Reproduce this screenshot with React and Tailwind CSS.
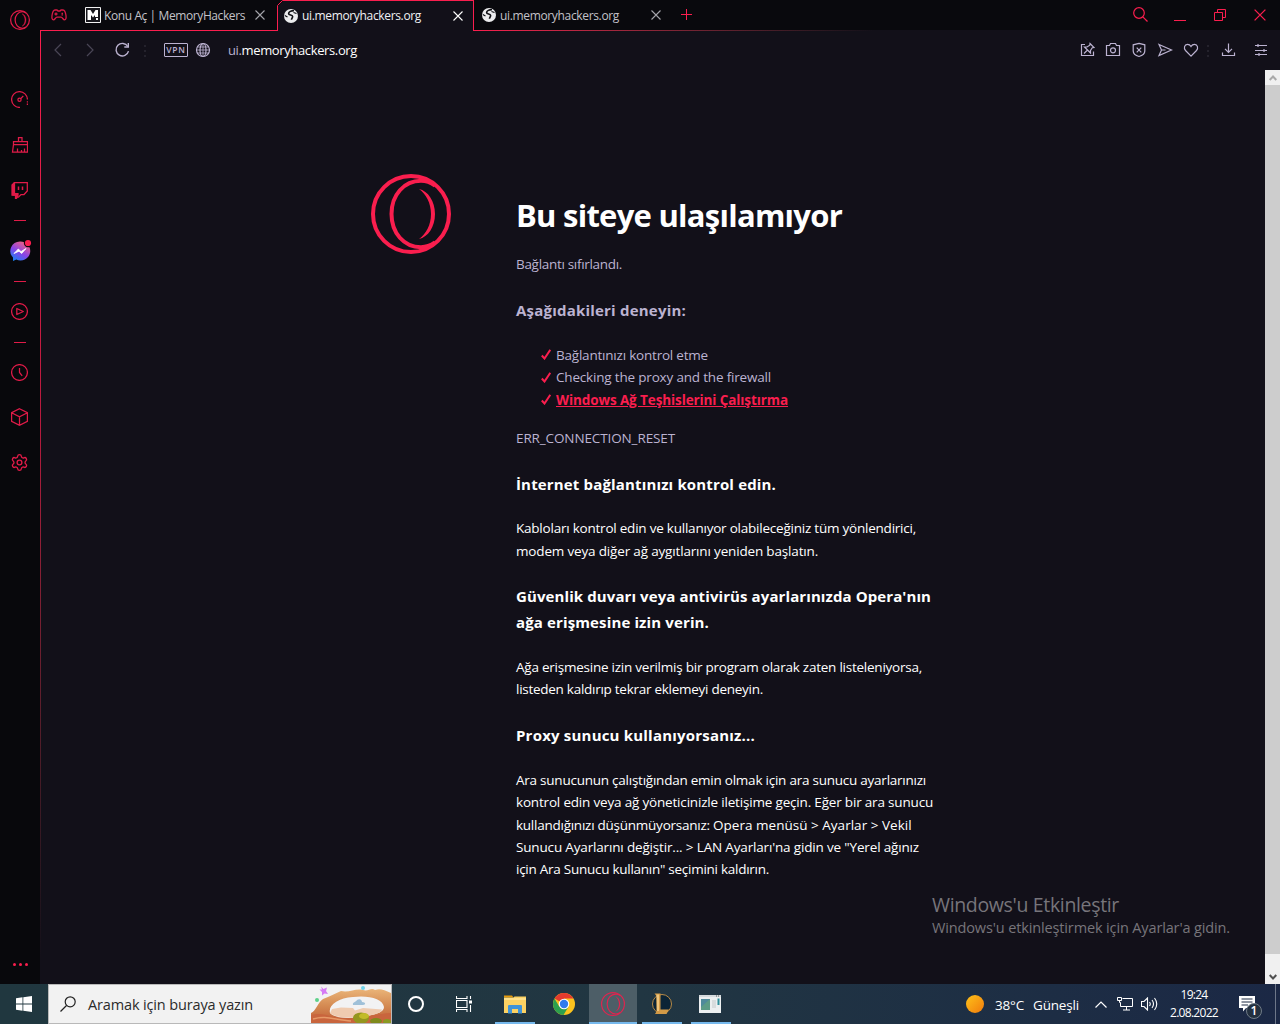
import { Settings } from "lucide-react";

function OperaLogo({ className, stroke = 4 }) {
  return (
    <svg viewBox="0 0 80 80" className={className} fill="none" stroke="currentColor" strokeWidth={stroke}>
      <circle cx="40" cy="40" r={40 - stroke / 2} />
      <path d="M64 11.5C59 8 54.500 6.800 50 6.800C33 6.800 20.500 21 20.500 40S33 73.200 50 73.200C54.500 73.200 59 72 64 68.500" />
      <path
        d="M48 15C57 17 64 27 64 40S57 63 48 65C55 60 60 51 60 40S55 20 48 15Z"
        fill="currentColor"
        strokeWidth={stroke > 4 ? 1.5 : 0}
      />
    </svg>
  );
}

function CloseIcon({ className }) {
  return (
    <svg viewBox="0 0 10 10" className={className} stroke="currentColor" strokeWidth="1.1">
      <path d="M0.500 0.500L9.500 9.500M9.500 0.500L0.500 9.500" />
    </svg>
  );
}

function GlobeFavicon() {
  return (
    <svg viewBox="0 0 14 14" className="w-[14px] h-[14px] shrink-0">
      <circle cx="7" cy="7" r="7" fill="#ececee" />
      <path d="M10 1.600C7.500 1.500 4.500 2.800 4.600 4.600C4.700 6.300 8.300 5.500 8.600 7.300C8.900 8.800 7.500 9 7.500 10.800" fill="none" stroke="#101014" strokeWidth="1.600" />
      <path d="M9.500 3.500L12.500 4.500M0.800 6.500L3.500 8" fill="none" stroke="#101014" strokeWidth="1.200" />
    </svg>
  );
}

function ToolIcon({ children, className = "w-4 h-4" }) {
  return (
    <svg viewBox="0 0 16 16" className={className} fill="none" stroke="currentColor" strokeWidth="1.200">
      {children}
    </svg>
  );
}

function Dots({ className }) {
  return (
    <div className={`flex flex-col gap-[3px] ${className}`}>
      <i className="w-[2px] h-[2px] bg-[#24222c]" />
      <i className="w-[2px] h-[2px] bg-[#24222c]" />
      <i className="w-[2px] h-[2px] bg-[#24222c]" />
    </div>
  );
}

function Dash({ className = "h-[15px]" }) {
  return (
    <div className={`flex items-center justify-center ${className}`}>
      <i className="w-3 h-px bg-[#e01b48]" />
    </div>
  );
}

function SideItem({ children, className = "h-[45px]" }) {
  return <div className={`flex items-center justify-center pr-px ${className}`}>{children}</div>;
}

function SideIcon({ children }) {
  return (
    <svg viewBox="0 0 17 17" className="w-[17px] h-[17px]" fill="none" stroke="currentColor" strokeWidth="1.250">
      {children}
    </svg>
  );
}

function Sidebar() {
  return (
    <aside className="w-10 shrink-0 flex flex-col bg-[#08080c] text-[#e01b48]">
      <div className="h-10 flex items-center justify-center mb-[37px]">
        <OperaLogo className="w-5 h-5" stroke={5} />
      </div>
      <SideItem>
        <SideIcon>
          <path d="M9 16.400A7.900 7.900 0 1 1 16.400 8.500" />
          <circle cx="8.500" cy="8.800" r="1.600" />
          <path d="M9.700 7.600L12.300 5" />
          <path d="M16.400 10.300V14" strokeDasharray="1.300 1" />
        </SideIcon>
      </SideItem>
      <SideItem>
        <SideIcon>
          <path d="M7.500 5.500V1.500h3.500V5.500M2.500 8.500V5.500h14v3M2.500 8.500h14M2.500 8.500L1.500 16h15V8.500M6.500 16v-3.500M10.500 16v-2M13.500 16v-3.500" />
        </SideIcon>
      </SideItem>
      <SideItem className="h-[46px] pt-px">
        <SideIcon>
          <path d="M3.500 0.700H16.300V9L13 12.500H10L7.500 15H5.500V13H2V3Z" />
          <path d="M1 3L3.500 0.500V11.500H7V13L5.500 16.500H4.500V13H1Z" fill="currentColor" />
          <path d="M7.500 4.500V8M11.500 4.500V8" strokeWidth="1.500" />
        </SideIcon>
      </SideItem>
      <Dash />
      <div className="h-[46px] flex items-center justify-center">
        <svg viewBox="0 0 24 24" className="w-6 h-6">
          <defs>
            <linearGradient id="msg" x1="0.200" y1="1" x2="0.800" y2="0">
              <stop offset="0" stopColor="#1684f5" />
              <stop offset="0.450" stopColor="#8744e8" />
              <stop offset="1" stopColor="#ff6477" />
            </linearGradient>
          </defs>
          <path d="M12 2.500A9.800 9.500 0 0 0 5 18.500V22L8.300 20.600A9.800 9.500 0 1 0 12 2.500Z" fill="url(#msg)" />
          <path d="M6 14.500L10.300 10L13 12.600L18 9.500L13.700 14.500L11 12.200Z" fill="#fff" stroke="#fff" strokeWidth=".8" />
          <circle cx="20" cy="4" r="4.200" fill="#08080c" />
          <circle cx="20" cy="4" r="3.100" fill="#fa1e4e" />
        </svg>
      </div>
      <Dash />
      <SideItem>
        <SideIcon>
          <circle cx="8.500" cy="8.500" r="7.900" />
          <path d="M5.800 5.500V11.500L12.300 8.500Z" strokeLinejoin="round" />
        </SideIcon>
      </SideItem>
      <Dash className="h-4" />
      <SideItem>
        <SideIcon>
          <circle cx="8.500" cy="8.500" r="7.900" />
          <path d="M8.500 4V8.500L11.200 11.800" />
        </SideIcon>
      </SideItem>
      <SideItem className="h-[45px] pb-px">
        <svg viewBox="0 0 17 18" className="w-[17px] h-[18px]" fill="none" stroke="currentColor" strokeWidth="1.250">
          <path d="M8.500 0.700L16.400 4.700V13.300L8.500 17.300L0.600 13.300V4.700ZM0.600 4.700L8.500 8.800L16.400 4.700M8.500 8.800V17.300" />
        </svg>
      </SideItem>
      <SideItem>
        <Settings className="w-[19px] h-[19px]" strokeWidth={1.7} />
      </SideItem>
      <div className="mt-auto mb-[18px] flex gap-[3px] justify-center">
        <i className="w-[3px] h-[3px] rounded-full bg-[#fa1e4e]" />
        <i className="w-[3px] h-[3px] rounded-full bg-[#fa1e4e]" />
        <i className="w-[3px] h-[3px] rounded-full bg-[#fa1e4e]" />
      </div>
    </aside>
  );
}

function TabBar() {
  return (
    <div className="h-[31px] flex bg-[#09090d] text-xs">
      <div className="w-[237px] shrink-0 flex items-center border-b border-[#fa1e4e]">
        <svg viewBox="0 0 16 12" className="w-4 h-3 ml-[11px] shrink-0 text-[#d81b46]" fill="none" stroke="currentColor" strokeWidth="1.300">
          <path d="M4 1H6L7 2H9L10 1H12C14 1 14.500 3 15 6.500C15.300 9 15 10.800 13.500 10.800C12 10.800 11.500 8.200 10 8.200H6C4.500 8.200 4 10.800 2.500 10.800C1 10.800 0.700 9 1 6.500C1.500 3 2 1 4 1Z" />
          <path d="M5 3.500V6.500M3.500 5H6.500M10.500 4.300H12M10.500 5.800H12" />
        </svg>
        <svg viewBox="0 0 16 16" className="w-4 h-4 ml-[18px] shrink-0">
          <path d="M0.500 0.500H15.500V15.500H0.500Z" fill="#17171c" stroke="#f1f1f1" />
          <path d="M2.500 13V3H5.500L8 7L10.500 3H13V10H10V8L8 10.500L6 8V13ZM11 11h2v2h-2z" fill="#fff" />
        </svg>
        <span className="ml-[3px] pt-[2px] whitespace-nowrap tracking-[-0.404px] text-[#c3c2c8]">Konu Aç | MemoryHackers</span>
        <CloseIcon className="w-[10px] h-[10px] ml-auto mr-[12px] shrink-0 text-[#a5a5ab]" />
      </div>
      <div className="relative w-[197px] shrink-0 flex items-center border-t border-x border-[#fa1e4e] bg-[#121019] pb-px">
        <svg viewBox="0 0 7 7" className="absolute -left-px -top-px w-[7px] h-[7px]">
          <path d="M0 0H7L0 7Z" fill="#09090d" />
          <path d="M0.500 7V5.500L5.500 0.500H7" fill="none" stroke="#fa1e4e" />
        </svg>
        <div className="ml-[6px] flex">
          <GlobeFavicon />
        </div>
        <span className="ml-1 pt-px whitespace-nowrap tracking-[-0.344px] text-[#f0f0f4]">ui.memoryhackers.org</span>
        <CloseIcon className="w-[10px] h-[10px] ml-auto mr-[10px] shrink-0 text-white" />
      </div>
      <div className="flex-1 flex flex-col">
        <div className="h-[30px] flex items-center">
          <div className="ml-2 flex">
            <GlobeFavicon />
          </div>
          <span className="ml-1 pt-[2px] whitespace-nowrap tracking-[-0.344px] text-[#c3c2c8] w-[150px]">ui.memoryhackers.org</span>
          <CloseIcon className="w-[10px] h-[10px] ml-px shrink-0 text-[#a5a5ab]" />
          <svg viewBox="0 0 11 11" className="w-[11px] h-[11px] ml-[20px] -mt-px text-[#fa1e4e]" stroke="currentColor">
            <path d="M5.500 0V11M0 5.500H11" />
          </svg>
          <div className="ml-auto flex items-center text-[#fa1e4e]">
            <svg viewBox="0 0 15 15" className="w-[15px] h-[15px] -mt-[2px]" fill="none" stroke="currentColor" strokeWidth="1.200">
              <circle cx="6" cy="6" r="5.300" />
              <path d="M9.800 9.800L14.500 14.500" />
            </svg>
            <i className="w-3 h-px bg-current ml-[26px] mt-[11px]" />
            <svg viewBox="0 0 12 12" className="w-3 h-3 ml-[28px]" fill="none" stroke="currentColor">
              <path d="M0.500 3.500H8.500V11.500H0.500ZM3.500 3.500V0.500H11.500V8.500H8.500" />
            </svg>
            <CloseIcon className="w-3 h-3 ml-[28px] mr-[14px]" />
          </div>
        </div>
        <div className="h-px bg-linear-to-r from-[#fa1e4e] to-[#121019] to-[400px]" />
      </div>
    </div>
  );
}

function Toolbar() {
  return (
    <div className="h-[39px] flex items-center bg-[#121019] text-[#bcb3d1]">
      <svg viewBox="0 0 8 14" className="w-2 h-[14px] ml-[13px] -mt-px text-[#4a4656]" fill="none" stroke="currentColor" strokeWidth="1.200">
        <path d="M7 1L1 7L7 13" />
      </svg>
      <svg viewBox="0 0 8 14" className="w-2 h-[14px] ml-[24px] -mt-px text-[#4a4656]" fill="none" stroke="currentColor" strokeWidth="1.200">
        <path d="M1 1L7 7L1 13" />
      </svg>
      <ToolIcon className="w-4 h-4 ml-[20px] -mt-px">
        <path d="M13.800 4.500A6.300 6.300 0 1 0 14.500 9.200" strokeWidth="1.400" />
        <path d="M14.300 1V5H10.300" strokeWidth="1.400" />
      </ToolIcon>
      <Dots className="ml-[14px]" />
      <span className="w-6 h-[14px] ml-[18px] -mt-px border border-[#bcb3d1] rounded-[1px] flex items-center justify-center text-[8.500px] font-semibold tracking-[0.700px]">VPN</span>
      <ToolIcon className="w-4 h-4 ml-[7px] -mt-px">
        <circle cx="8" cy="8" r="6.500" />
        <ellipse cx="8" cy="8" rx="3" ry="6.500" />
        <path d="M8 1.500V14.500M1.500 8H14.500M2.500 5H13.500M2.500 11H13.500" strokeWidth=".8" />
      </ToolIcon>
      <span className="ml-[17px] text-[13px] whitespace-nowrap tracking-[-0.368px]">
        ui.<span className="text-white">memoryhackers.org</span>
      </span>
      <div className="ml-auto -mt-px flex items-center gap-[10px]">
        <ToolIcon>
          <path d="M6 2.500H2.500V13.500H14.500V9.500" />
          <path d="M11 1.500L15 5.500L13.300 5.700L11.500 8.500L11.500 11L5.500 5L8 5L10.800 3.200ZM8.500 8L5 11.500" />
        </ToolIcon>
        <ToolIcon>
          <path d="M1.500 3.500H4.500L5.500 1.500H10.500L11.500 3.500H14.500V13.500H1.500Z" />
          <circle cx="8" cy="8.300" r="2.500" />
        </ToolIcon>
        <ToolIcon>
          <path d="M8 1.300L13.800 2.800V9C13.800 12 11.500 13.500 8 14.500C4.500 13.500 2.200 12 2.200 9V2.800Z" />
          <path d="M5.700 5.700L10.300 10.300M10.300 5.700L5.700 10.300" />
        </ToolIcon>
        <ToolIcon>
          <path d="M2 2.500L14.500 8L2 13.500L4.500 8ZM4.500 8H8.500" />
        </ToolIcon>
        <ToolIcon>
          <path d="M8 14.200L2.500 8.500C0.500 6.300 1.300 2.300 4.500 2.300C6.300 2.300 7.300 3.300 8 4.500C8.700 3.300 9.700 2.300 11.500 2.300C14.700 2.300 15.500 6.300 13.500 8.500Z" />
        </ToolIcon>
      </div>
      <Dots className="ml-[8px]" />
      <ToolIcon className="w-4 h-4 ml-[12px] -mt-px">
        <path d="M7.500 1.500V10M4 6.800L7.500 10.300L11 6.800M1.500 10.500V13.500H13.500V10.500" />
      </ToolIcon>
      <ToolIcon className="w-4 h-4 ml-[16px] mr-[11px] -mt-px">
        <path d="M2 3.500H14M2 8.500H14M2 12.500H14M5 2V5M11 7V10M6 11V14" />
      </ToolIcon>
    </div>
  );
}

function Tip({ children }) {
  return (
    <li className="flex items-center h-[22.400px]">
      <svg viewBox="0 0 10 11" className="w-[10px] h-[11px] mr-[5px]" fill="none" stroke="#fa1e4e" strokeWidth="2">
        <path d="M0.800 6.500L3.500 9.500L9.300 0.700" />
      </svg>
      {children}
    </li>
  );
}

function ErrorPage() {
  return (
    <main className="flex-1 flex bg-[#121019] pl-[330px] text-[13.500px] leading-[22.400px] text-white whitespace-nowrap">
      <OperaLogo className="w-20 h-20 mt-[104px] mr-[65px] shrink-0 text-[#fa1e4e]" />
      <div className="w-[420px] pt-[123px]">
        <h1 className="text-[31px] leading-[44px] font-bold tracking-[-0.743px] mb-[16px]">Bu siteye ulaşılamıyor</h1>
        <p className="text-[#bcb3d1] tracking-[-0.309px] mb-[22.400px]">Bağlantı sıfırlandı.</p>
        <h2 className="text-[15px] leading-[25.600px] font-bold tracking-[0.209px] text-[#bcb3d1] mb-[20.400px]">
          Aşağıdakileri deneyin:
        </h2>
        <ul className="pl-[25px] text-[#bcb3d1] mb-4">
          <Tip>
            <span className="tracking-[-0.209px]">Bağlantınızı kontrol etme</span>
          </Tip>
          <Tip>
            <span className="tracking-[-0.183px]">Checking the proxy and the firewall</span>
          </Tip>
          <Tip>
            <a className="font-bold underline tracking-[-0.102px] text-[#fa1e4e]">Windows Ağ Teşhislerini Çalıştırma</a>
          </Tip>
        </ul>
        <p className="text-[#bcb3d1] tracking-[-0.119px] mb-[22.400px]">ERR_CONNECTION_RESET</p>
        <h2 className="text-[15px] leading-[25.600px] font-bold tracking-[0.155px] mb-[19.900px]">
          İnternet bağlantınızı kontrol edin.
        </h2>
        <p className="mb-[22.100px]">
          <span className="tracking-[-0.223px]">Kabloları kontrol edin ve kullanıyor olabileceğiniz tüm yönlendirici,</span>
          <br />
          <span className="tracking-[-0.166px]">modem veya diğer ağ aygıtlarını yeniden başlatın.</span>
        </p>
        <h2 className="text-[15px] leading-[25.600px] font-bold mb-[20.400px]">
          <span className="tracking-[0.098px]">Güvenlik duvarı veya antivirüs ayarlarınızda Opera'nın</span>
          <br />
          <span className="tracking-[0.131px]">ağa erişmesine izin verin.</span>
        </h2>
        <p className="mb-[22.600px]">
          <span className="tracking-[-0.236px]">Ağa erişmesine izin verilmiş bir program olarak zaten listeleniyorsa,</span>
          <br />
          <span className="tracking-[-0.269px]">listeden kaldırıp tekrar eklemeyi deneyin.</span>
        </p>
        <h2 className="text-[15px] leading-[25.600px] font-bold tracking-[0.204px] mb-[20px]">
          Proxy sunucu kullanıyorsanız...
        </h2>
        <p>
          <span className="tracking-[-0.239px]">Ara sunucunun çalıştığından emin olmak için ara sunucu ayarlarınızı</span>
          <br />
          <span className="tracking-[-0.183px]">kontrol edin veya ağ yöneticinizle iletişime geçin. Eğer bir ara sunucu</span>
          <br />
          <span className="tracking-[-0.250px] word-spacing-[1px]">kullandığınızı düşünmüyorsanız: </span>
          <span className="tracking-[0.020px]">Opera menüsü &gt; Ayarlar &gt; Vekil</span>
          <br />
          <span className="tracking-[-0.163px]">Sunucu Ayarlarını değiştir... &gt; LAN Ayarları'na gidin ve "Yerel ağınız</span>
          <br />
          <span className="tracking-[-0.263px]">için Ara Sunucu kullanın" seçimini kaldırın.</span>
        </p>
      </div>
    </main>
  );
}

function Scrollbar() {
  return (
    <div className="w-[15px] flex flex-col bg-[#f0f0f0]">
      <div className="h-[15px] flex items-center justify-center">
        <svg viewBox="0 0 8 6" className="w-2 h-[6px]" fill="none" stroke="#a9a9a9" strokeWidth="2">
          <path d="M0.700 5L4 1.500L7.300 5" />
        </svg>
      </div>
      <div className="h-[869px] bg-[#cdcdcd]" />
      <div className="flex-1 flex items-end justify-center pb-[4px]">
        <svg viewBox="0 0 8 6" className="w-2 h-[6px]" fill="none" stroke="#505050" strokeWidth="2">
          <path d="M0.700 1L4 4.500L7.300 1" />
        </svg>
      </div>
    </div>
  );
}

function ArchPicture() {
  return (
    <svg viewBox="0 0 80 38" className="w-20 h-[38px] shrink-0">
      <defs>
        <linearGradient id="rock" x1="0" y1="0" x2="0" y2="1">
          <stop offset="0" stopColor="#eab478" />
          <stop offset="0.500" stopColor="#d48a52" />
          <stop offset="1" stopColor="#c05c35" />
        </linearGradient>
      </defs>
      <path d="M0 28C5 26 7 17 12 14C19 11 24 9 30 6C38 8 45 3 52 5C57 7 60 2 64 5C69 3 73 5 80 8V38H0Z" fill="url(#rock)" />
      <path d="M0 30C6 28 14 29 22 32C40 36 62 29 80 28V38H0Z" fill="#c9653d" />
      <path d="M19 28C17 20 27 13 42 12C58 10 72 14 73 22C73 27 66 29 56 31C42 34 24 34 19 28Z" fill="#f2f2f3" />
      <path d="M19 28L21 24L30 22.500L42 23L44 25.500L52 23L71 24.500C70 28 66 29 56 31C42 34 24 33 19 28Z" fill="#efcbb0" />
      <path d="M42 20C41 17 45 17 46 15C49 13 51 15 51 17C55 17 55 20 52 20Z" fill="#9fc0d8" />
      <path d="M2 34C15 30 24 35 40 36" fill="none" stroke="#e79a68" strokeWidth="1.500" />
      <ellipse cx="50" cy="33" rx="8" ry="5.500" fill="#94961f" />
      <ellipse cx="53" cy="31" rx="5" ry="3" fill="#c2bb28" />
      <ellipse cx="65" cy="36" rx="6" ry="3" fill="#7f8a1c" />
      <ellipse cx="76" cy="37" rx="4" ry="3" fill="#8a9a22" />
      <path d="M10 1.500L12.500 4L16 2.500L15 6L17 9L13.500 8.500L11 10.500L11 7L8.500 4.500L11 4.500Z" fill="#d67bf5" />
      <circle cx="6" cy="15" r="2" fill="#5ed189" />
      <circle cx="52" cy="3" r="2" fill="#6fd3ea" />
    </svg>
  );
}

function TaskItem({ children, className = "w-12" }) {
  return <div className={`relative h-10 flex items-center justify-center shrink-0 ${className}`}>{children}</div>;
}

function Taskbar() {
  return (
    <footer className="h-10 flex items-center bg-linear-to-r from-[#20373f] via-[#213642] to-[#1b2845] text-white">
      <TaskItem>
        <svg viewBox="0 0 16 16" className="w-4 h-4" fill="#fff">
          <path d="M0 2.200L6.500 1.300V7.600H0ZM7.300 1.200L16 0V7.600H7.300ZM0 8.400H6.500V14.700L0 13.800ZM7.300 8.400H16V16L7.300 14.800Z" />
        </svg>
      </TaskItem>
      <div className="w-[344px] h-10 shrink-0 flex items-center bg-[#f2f2f2] border border-[#b9b9b9] text-[#2b2b2b]">
        <svg viewBox="0 0 16 16" className="w-4 h-4 ml-[11px]" fill="none" stroke="#222" strokeWidth="1.200">
          <circle cx="10.200" cy="5.800" r="5" />
          <path d="M6.500 9.500L0.500 15.500" />
        </svg>
        <span className="ml-3 mt-px text-[14.500px] whitespace-nowrap tracking-[-0.144px]">Aramak için buraya yazın</span>
        <div className="ml-auto flex">
          <ArchPicture />
        </div>
      </div>
      <TaskItem>
        <i className="w-4 h-4 rounded-full border-2 border-white" />
      </TaskItem>
      <TaskItem>
        <svg viewBox="0 0 17 16" className="w-[17px] h-4" fill="none" stroke="#fff" strokeWidth="1.100">
          <path d="M0.500 0V2.500H11V0M0.500 4.500H11V11.500H0.500ZM0.500 16V13.500H11V16M14.500 0V3M14.500 9V16" />
          <path d="M13 4.500h3v3h-3z" fill="#fff" stroke="none" />
        </svg>
      </TaskItem>
      <TaskItem className="w-[54px]">
        <svg viewBox="0 0 22 19" className="w-[22px] h-[19px]">
          <path d="M0 0.500H8L9.500 2.500H0Z" fill="#e59a0c" />
          <path d="M0 2.500H9.500L10.500 1.500H22V18H0Z" fill="#fcd262" />
          <path d="M0 3H22V5H0Z" fill="#ffe08a" />
          <path d="M4 11Q4 10 5 10H17Q18 10 18 11V18.500H14V14H8V18.500H4Z" fill="#3f93d8" />
        </svg>
        <i className="absolute left-[7px] bottom-0 w-10 h-[2px] bg-[#76b9ed]" />
      </TaskItem>
      <TaskItem className="w-[44px]">
        <svg viewBox="0 0 22 22" className="w-[22px] h-[22px]">
          <circle cx="11" cy="11" r="11" fill="#fcc31e" />
          <path d="M11 11L1.500 5.500A11 11 0 0 1 20.500 5.500H11Z" fill="#e33b2e" />
          <path d="M1.500 5.500A11 11 0 0 0 10.500 22L15.500 13.700L11 11L6.200 13.500Z" fill="#2da04e" />
          <circle cx="11" cy="11" r="5.300" fill="#fff" />
          <circle cx="11" cy="11" r="4.200" fill="#2f7bee" />
        </svg>
      </TaskItem>
      <TaskItem className="w-12 ml-[3px] bg-[#4d5e67]">
        <OperaLogo className="w-6 h-6 text-[#e0244f]" stroke={3.9} />
        <i className="absolute inset-x-0 bottom-0 h-[2px] bg-[#76b9ed]" />
      </TaskItem>
      <TaskItem className="w-[50px]">
        <svg viewBox="0 0 22 22" className="w-[22px] h-[22px]">
          <circle cx="11" cy="11" r="9.500" fill="#0b2436" stroke="#b98a45" strokeWidth="1" />
          <path d="M3.500 0.500H9.500V16.500H18L15.500 21H4L5.500 18.500V3Z" fill="#d39a46" />
          <path d="M5.500 1.500H8V18H6Z" fill="#f0c57c" />
        </svg>
        <i className="absolute left-[5px] bottom-0 w-10 h-[2px] bg-[#76b9ed]" />
      </TaskItem>
      <TaskItem className="w-[46px]">
        <svg viewBox="0 0 22 18" className="w-[22px] h-[18px]">
          <path d="M0 0H22V18H0Z" fill="#eceff0" />
          <path d="M0 0H22V2H0Z" fill="#d5dadd" />
          <path d="M17 0.500h1v1h-1zM19 0.500h1v1h-1z" fill="#555" />
          <path d="M2 4H11V15H2Z" fill="#5c9b86" />
          <path d="M2 4H11L2 12Z" fill="#4f8a9b" />
          <path d="M13 5H17V13H13Z" fill="#d8dcdd" />
          <path d="M18.500 3.500H20.500V10H18.500Z" fill="#2f8f9b" />
        </svg>
        <i className="absolute left-[4px] bottom-0 w-10 h-[2px] bg-[#76b9ed]" />
      </TaskItem>
      <i className="ml-auto w-[18px] h-[18px] rounded-full bg-linear-to-br from-[#fdc21a] to-[#f07a0c]" />
      <span className="ml-[11px] mt-[2px] text-[13.500px] w-[38px] whitespace-nowrap tracking-[-0.184px]">38°C</span>
      <span className="mt-[2px] text-[13.500px] w-[46px] whitespace-nowrap tracking-[-0.174px]">Güneşli</span>
      <svg viewBox="0 0 12 7" className="w-3 h-[7px] ml-4" fill="none" stroke="#fff" strokeWidth="1.200">
        <path d="M0.500 6.500L6 1L11.500 6.500" />
      </svg>
      <svg viewBox="0 0 17 14" className="w-[17px] h-[14px] ml-[10px]" fill="none" stroke="#fff">
        <path d="M5.500 1.500H15.500V9.500H3.500V5.500M9.500 9.500V13M6 13H13M0.500 0.500H4.500V3.500H0.500ZM2.500 3.500V5.500H3.500" />
      </svg>
      <svg viewBox="0 0 17 14" className="w-[17px] h-[14px] ml-[7px]" fill="none" stroke="#fff" strokeWidth="1.100">
        <path d="M0.500 4.500H3L6.500 1V13L3 9.500H0.500ZM8.500 5Q10 7 8.500 9M11 3Q14 7 11 11M13.500 1Q18 7 13.500 13" />
      </svg>
      <div className="w-[48px] ml-[12px] flex flex-col items-center text-[12px] leading-[18px] whitespace-nowrap">
        <span className="tracking-[-0.722px]">19:24</span>
        <span className="tracking-[-0.705px]">2.08.2022</span>
      </div>
      <div className="relative ml-[20px] mr-[19px] w-[18px] h-[18px]">
        <svg viewBox="0 0 18 18" className="w-[18px] h-[18px]">
          <path d="M1 1H17V13H8L5 16.500V13H1Z" fill="#fff" />
          <path d="M3.500 4H14.500M3.500 7H14.500M3.500 10H10" stroke="#1c2a42" />
        </svg>
        <span className="absolute left-[8px] top-[8px] w-4 h-4 rounded-full bg-[#23303f] border border-[#707b87] text-[12px] font-semibold leading-[14px] text-center">1</span>
      </div>
      <i className="w-px h-10 bg-[#6d7789] mr-[4px]" />
    </footer>
  );
}

export default function App() {
  return (
    <div className="w-[1280px] h-[1024px] flex flex-col overflow-hidden font-['Open_Sans','Noto_Sans',sans-serif]">
      <div className="flex-1 min-h-0 flex">
        <Sidebar />
        <div className="flex-1 flex flex-col">
          <TabBar />
          <div className="flex-1 flex">
            <div className="w-px bg-linear-to-b from-[#fa1e4e] via-[#b51a3d] via-[400px] to-[#121019] to-[930px]" />
            <div className="flex-1 flex flex-col">
              <Toolbar />
              <div className="flex-1 flex">
                <ErrorPage />
                <Scrollbar />
              </div>
            </div>
          </div>
        </div>
      </div>
      <Taskbar />
      {/* activation watermark floats over the whole desktop */}
      <div className="absolute left-[932px] top-[892px] text-[#77757b] whitespace-nowrap">
        <p className="text-[19.500px] leading-[26px] tracking-[-0.342px]">Windows'u Etkinleştir</p>
        <p className="text-[14.500px] leading-[20px] tracking-[-0.135px]">Windows'u etkinleştirmek için Ayarlar'a gidin.</p>
      </div>
    </div>
  );
}
